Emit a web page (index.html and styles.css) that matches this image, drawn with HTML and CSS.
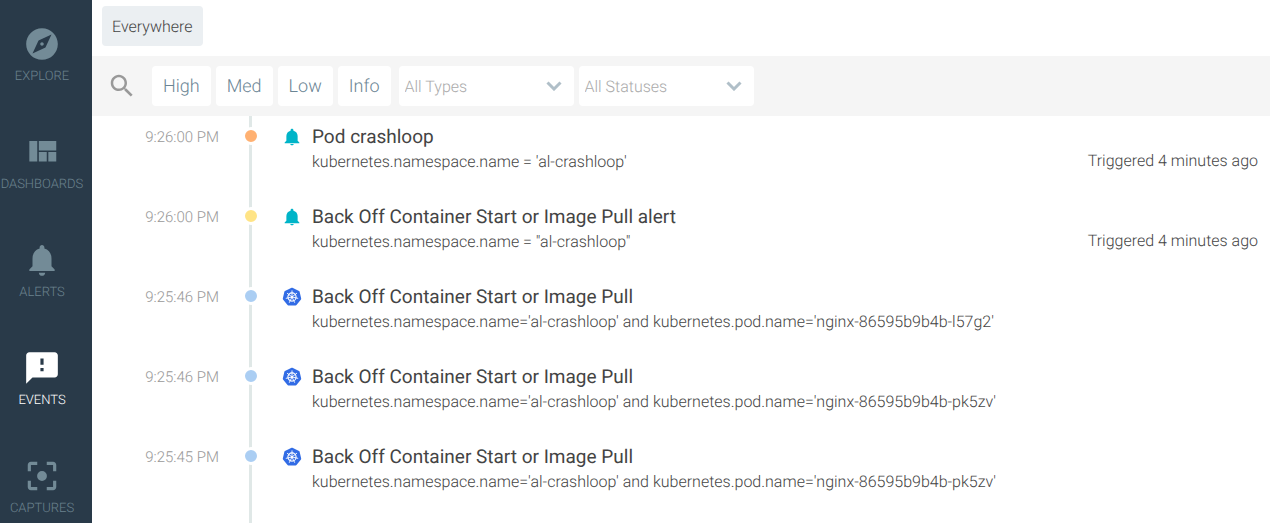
FILE: index.html
```html
<!DOCTYPE html>
<html lang="en">
<head>
<meta charset="utf-8">
<title>Events</title>
<link rel="stylesheet" href="styles.css">
</head>
<body>
<svg class="defs" aria-hidden="true">
  <symbol id="bell" viewBox="0 0 24 24"><path d="M12 23c1.300 0 2.200-.8 2.300-1.800H9.700C9.800 22.200 10.700 23 12 23zM19.500 17v-6.200c0-3.700-2.300-6.500-5.600-7.200V2.900C13.900 1.800 13.100 1 12 1s-1.900.8-1.900 1.900v.7c-3.300.7-5.600 3.500-5.600 7.200V17L2.200 19.200v1H21.800v-1z"/></symbol>
  <symbol id="helm" viewBox="0 0 20 20">
    <path fill="#326ce5" stroke="#326ce5" stroke-width="2" stroke-linejoin="round" d="M10 1.700 16.600 4.800 18.200 11.800 13.700 17.500H6.300L1.800 11.800 3.400 4.800z"/>
    <g fill="none" stroke="#fff" stroke-linecap="round">
      <circle cx="10" cy="10" r="4.100" stroke-width="1.100"/>
      <path stroke-width=".9" d="M10 9V3.800M10 10 14.700 6.300M10 10l5.800 1.300M10 10l2.600 5.400M10 10l-2.600 5.400M10 10l-5.800 1.300M10 10 5.300 6.300"/>
    </g>
    <circle cx="10" cy="10" r="1" fill="#fff"/>
  </symbol>
</svg>
<div class="app">
  <nav class="sidebar" aria-label="Main">
    <a class="nav-item" href="#explore">
      <svg class="nav-icon" viewBox="0 0 24 24"><path d="M12 10.900c-.61 0-1.100.49-1.100 1.100s.49 1.100 1.100 1.100 1.100-.49 1.100-1.100-.49-1.100-1.100-1.100zM12 2C6.480 2 2 6.480 2 12s4.480 10 10 10 10-4.480 10-10S17.520 2 12 2zm2.190 12.190L6 18l3.810-8.190L18 6l-3.810 8.190z"/></svg>
      <span>EXPLORE</span>
    </a>
    <a class="nav-item" href="#dashboards">
      <svg class="nav-icon" viewBox="0 0 24 24"><path d="M10 18h5v-6h-5v6zm-6 0h5V5H4v13zm12 0h5v-6h-5v6zM10 5v6h11V5H10z"/></svg>
      <span>DASHBOARDS</span>
    </a>
    <a class="nav-item" href="#alerts">
      <svg class="nav-icon" viewBox="0 0 24 24"><path d="M12 22c1.100 0 2-.9 2-2h-4c0 1.100.9 2 2 2zm6-6v-5c0-3.070-1.640-5.640-4.500-6.320V4c0-.83-.67-1.500-1.500-1.500s-1.500.67-1.500 1.500v.68C7.630 5.360 6 7.920 6 11v5l-2 2v1h16v-1l-2-2z"/></svg>
      <span>ALERTS</span>
    </a>
    <a class="nav-item active" href="#events" aria-current="page">
      <svg class="nav-icon" viewBox="0 0 24 24"><path d="M20 2H4c-1.100 0-1.990.9-1.990 2L2 22l4-4h14c1.100 0 2-.9 2-2V4c0-1.100-.9-2-2-2zm-7 12h-2v-2h2v2zm0-4h-2V6h2v4z"/></svg>
      <span>EVENTS</span>
    </a>
    <a class="nav-item" href="#captures">
      <svg class="nav-icon" viewBox="0 0 24 24"><path d="M5 15H3v4c0 1.100.9 2 2 2h4v-2H5v-4zM5 5h4V3H5c-1.100 0-2 .9-2 2v4h2V5zm14-2h-4v2h4v4h2V5c0-1.100-.9-2-2-2zm0 16h-4v2h4c1.100 0 2-.9 2-2v-4h-2v4zM12 8.900a3.100 3.100 0 1 0 0 6.200 3.100 3.100 0 0 0 0-6.200z"/></svg>
      <span>CAPTURES</span>
    </a>
  </nav>
  <main class="main">
    <header class="scope"><button class="scope-button" type="button">Everywhere</button></header>
    <div class="filters">
      <button class="search" type="button" aria-label="Search">
        <svg viewBox="0 0 24 24"><path d="M15.500 14h-.79l-.28-.27C15.410 12.590 16 11.110 16 9.500 16 5.910 13.090 3 9.500 3S3 5.910 3 9.500 5.910 16 9.500 16c1.610 0 3.090-.59 4.230-1.570l.27.28v.79l5 4.990L20.490 19l-4.990-5zm-6 0C7.010 14 5 11.990 5 9.500S7.010 5 9.500 5 14 7.010 14 9.500 11.990 14 9.500 14z"/></svg>
      </button>
      <div class="severities">
        <button class="severity" type="button">High</button>
        <button class="severity" type="button">Med</button>
        <button class="severity" type="button">Low</button>
        <button class="severity" type="button">Info</button>
      </div>
      <div class="selects">
        <div class="select-box">
          <select aria-label="Type"><option>All Types</option></select>
          <svg class="chevron" viewBox="0 0 16 10"><path d="M1.500 1.500 8 8l6.500-6.500"/></svg>
        </div>
        <div class="select-box">
          <select aria-label="Status"><option>All Statuses</option></select>
          <svg class="chevron" viewBox="0 0 16 10"><path d="M1.500 1.500 8 8l6.500-6.500"/></svg>
        </div>
      </div>
    </div>
    <ul class="events">
      <li class="event">
        <time class="time">9:26:00 PM</time>
        <span class="rail"><span class="dot high"></span></span>
        <svg class="event-icon bell"><use href="#bell"/></svg>
        <div class="event-text"><h2>Pod crashloop</h2><p>kubernetes.namespace.name = 'al-crashloop'</p></div>
        <span class="status">Triggered 4 minutes ago</span>
      </li>
      <li class="event">
        <time class="time">9:26:00 PM</time>
        <span class="rail"><span class="dot med"></span></span>
        <svg class="event-icon bell"><use href="#bell"/></svg>
        <div class="event-text"><h2>Back Off Container Start or Image Pull alert</h2><p>kubernetes.namespace.name = "al-crashloop"</p></div>
        <span class="status">Triggered 4 minutes ago</span>
      </li>
      <li class="event">
        <time class="time">9:25:46 PM</time>
        <span class="rail"><span class="dot low"></span></span>
        <svg class="event-icon"><use href="#helm"/></svg>
        <div class="event-text"><h2>Back Off Container Start or Image Pull</h2><p>kubernetes.namespace.name='al-crashloop' and kubernetes.pod.name='nginx-86595b9b4b-l57g2'</p></div>
      </li>
      <li class="event">
        <time class="time">9:25:46 PM</time>
        <span class="rail"><span class="dot low"></span></span>
        <svg class="event-icon"><use href="#helm"/></svg>
        <div class="event-text"><h2>Back Off Container Start or Image Pull</h2><p>kubernetes.namespace.name='al-crashloop' and kubernetes.pod.name='nginx-86595b9b4b-pk5zv'</p></div>
      </li>
      <li class="event">
        <time class="time">9:25:45 PM</time>
        <span class="rail"><span class="dot low"></span></span>
        <svg class="event-icon"><use href="#helm"/></svg>
        <div class="event-text"><h2>Back Off Container Start or Image Pull</h2><p>kubernetes.namespace.name='al-crashloop' and kubernetes.pod.name='nginx-86595b9b4b-pk5zv'</p></div>
      </li>
    </ul>
  </main>
</div>
</body>
</html>
```

FILE: styles.css
```css
* { box-sizing: border-box; }

body {
  margin: 0;
  font-family: Roboto, "Liberation Sans", sans-serif;
  font-weight: 300;
  font-size: 16px;
  color: #444;
  background: #fff;
  text-rendering: geometricPrecision;
}

button, select { font: inherit; text-rendering: inherit; border: 0; cursor: pointer; }

.defs { position: absolute; width: 0; height: 0; }

.app { display: flex; height: 100vh; overflow: hidden; }

.sidebar {
  flex: none;
  width: 92px;
  padding: 25px 8px 0 0;
  background: #293a49;
  overflow: hidden;
}

.nav-item {
  display: flex;
  flex-direction: column;
  align-items: center;
  gap: 6px;
  height: 108px;
  color: #6b828e;
  font-size: 13px;
  line-height: 16px;
  text-decoration: none;
}

.nav-icon { width: 38px; height: 38px; fill: #738b97; }
.nav-item.active { color: #fff; }
.nav-item.active .nav-icon { fill: #fff; }

.main { flex: 1; min-width: 0; display: flex; flex-direction: column; overflow: hidden; }

.scope { padding: 6px 10px 10px; }

.scope-button {
  display: block;
  height: 40px;
  padding: 0 10px;
  border-radius: 4px;
  background: #ebeff2;
  color: #444;
}

.filters {
  display: flex;
  align-items: center;
  padding: 10px 15px;
  background: #f5f5f5;
}

.search { width: 30px; height: 30px; margin-right: 15px; padding: 0; background: none; }
.search svg { display: block; width: 30px; height: 30px; fill: #999; }

.severities, .selects { display: flex; gap: 5px; }
.selects { margin-left: 8px; }

.severity {
  height: 40px;
  padding: 0 11px;
  border-radius: 4px;
  background: #fff;
  color: #6b8594;
  font-size: 18px;
}

.select-box {
  display: grid;
  align-items: center;
  width: 175px;
  height: 40px;
  border-radius: 4px;
  background: #fff;
}

.select-box > * { grid-area: 1 / 1; }

.select-box select {
  appearance: none;
  width: 100%;
  height: 100%;
  padding: 0 32px 0 6px;
  border-radius: 4px;
  background: transparent;
  color: #aaa;
}

.chevron {
  justify-self: end;
  width: 16px;
  height: 10px;
  margin-right: 12px;
  fill: none;
  stroke: #b0bfc8;
  stroke-width: 3;
  pointer-events: none;
}

.events {
  flex: 1;
  display: flex;
  flex-direction: column;
  margin: 0;
  padding: 0;
  list-style: none;
}

.event {
  flex: none;
  display: grid;
  grid-template-columns: 127px 18px 20px minmax(0, 1fr) auto;
  min-height: 80px;
  padding-right: 12px;
}

.event:last-child { flex: 1 0 auto; }

.time { padding-top: 11px; font-size: 15px; line-height: 20px; text-align: right; color: #999; }

.rail { position: relative; margin: 0 -23px 0 23px; }

.rail::before {
  content: "";
  position: absolute;
  inset: 0 auto 0 7px;
  width: 3px;
  background: #e0e8e7;
}

.dot {
  position: relative;
  display: block;
  width: 18px;
  height: 18px;
  margin-top: 11px;
  border: 3px solid #fff;
  border-radius: 50%;
}

.high { background: #ffb172; }
.med { background: #ffe486; }
.low { background: #abcef3; }

.event-icon { width: 20px; height: 20px; margin: 11px 0 0 45px; }
.event-icon.bell { height: 18px; margin-top: 12px; fill: #00b4c8; }

.event-text { padding: 9px 12px 0 55px; }
.event-text h2 { margin: 0; font-size: 19px; font-weight: 400; line-height: 24px; }
.event-text p { margin: 3px 0 0; line-height: 20px; }

.status { padding-top: 35px; line-height: 20px; }
```
